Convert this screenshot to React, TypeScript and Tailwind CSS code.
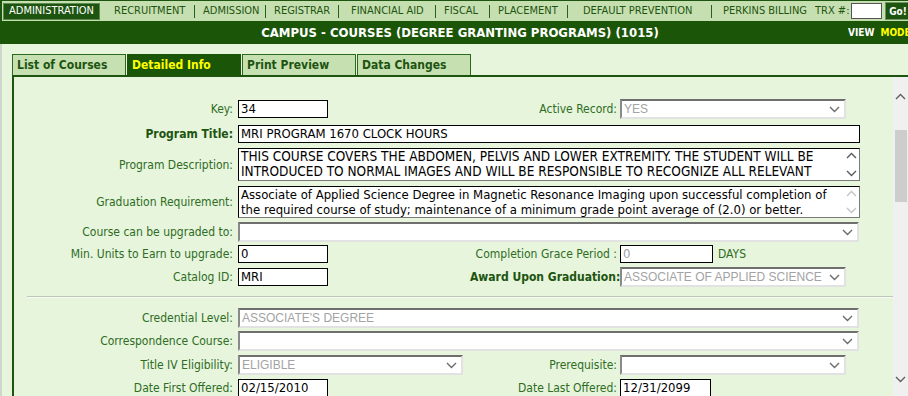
import React from "react";

const T = "font-['Tahoma','DejaVu_Sans_Condensed','DejaVu_Sans',sans-serif]";
const A = "font-['Liberation_Sans','Arial',sans-serif]";

function Chevron({ color = "#6b6b6b" }: { color?: string }) {
  return (
    <svg width="11" height="7" viewBox="0 0 11 7" className="shrink-0">
      <polyline points="1,1 5.5,5.5 10,1" fill="none" stroke={color} strokeWidth="1.4" />
    </svg>
  );
}

function ChevronUp({ color = "#6b6b6b" }: { color?: string }) {
  return (
    <svg width="11" height="7" viewBox="0 0 11 7" className="shrink-0">
      <polyline points="1,6 5.5,1.5 10,6" fill="none" stroke={color} strokeWidth="1.4" />
    </svg>
  );
}

function Label({ children, bold, w = "left" }: { children: React.ReactNode; bold?: boolean; w?: "left" | "right" }) {
  return (
    <div
      className={`${T} shrink-0 text-right text-[12px] whitespace-nowrap ${w === "left" ? "w-[224px] pr-[5px]" : "w-[150px] pr-[3px]"} ${bold ? "font-bold text-[#1d5410]" : "text-[#2f6c1f]"}`}
    >
      {children}
    </div>
  );
}

function TextInput({ value, w, gray }: { value: string; w: string; gray?: boolean }) {
  return (
    <div className={`${T} ${w} h-[18px] shrink-0 border border-black bg-white px-[2px] text-[13px] leading-[16px] ${gray ? "text-[#a0a0a0]" : "text-black"}`}>
      {value}
    </div>
  );
}

function Select({ value, w }: { value?: string; w: string }) {
  return (
    <div className={`${A} ${w} h-[20px] shrink-0 flex items-center justify-between border-t-2 border-l-2 border-t-[#6e6e6e] border-l-[#8a8a8a] border-r-2 border-b-2 border-r-[#e2e2e2] border-b-[#e2e2e2] bg-white pl-[2px] pr-[4px] text-[12px] leading-[16px] text-[#a3a3a3]`}>
      <span className="whitespace-nowrap overflow-hidden">{value ?? ""}</span>
      <Chevron />
    </div>
  );
}

function TextArea({ lines, h, arrowColor, size }: { lines: string[]; h: string; arrowColor: string; size: string }) {
  return (
    <div className={`${h} w-[622px] shrink-0 flex border border-black border-r-[#7a7a7a] border-b-[#7a7a7a] bg-white`}>
      <div className={`${T} ${size} flex-1 overflow-hidden pl-[2px] leading-[15px] text-black whitespace-nowrap`}>
        {lines.map((l, i) => (
          <div key={i}>{l}</div>
        ))}
      </div>
      <div className="w-[16px] flex flex-col items-center justify-between py-[3px]">
        <ChevronUp color={arrowColor} />
        <Chevron color={arrowColor} />
      </div>
    </div>
  );
}

function NavItem({ children, w }: { children: React.ReactNode; w: string }) {
  return <div className={`${w} shrink-0 whitespace-nowrap`}>{children}</div>;
}

function Sep({ w }: { w: string }) {
  return (
    <div className={`${w} shrink-0 flex`}>
      <div className="w-px h-[13px] bg-[#2a5e1c]" />
    </div>
  );
}

export default function App() {
  return (
    <div className="w-[908px] h-[396px] overflow-hidden bg-[#e6f5dc] relative">
      {/* Top nav */}
      <div className={`${T} h-[21px] flex items-center border-t border-l-2 border-[#1d5410] bg-[#c6dfb0] text-[11px] text-[#1d5410]`}>
        <div className="ml-px w-[97px] h-[17px] shrink-0 flex items-center justify-center bg-[#1d5410] border border-[#5d8a4e] text-white">
          ADMINISTRATION
        </div>
        <div className="w-[14px] shrink-0" />
        <NavItem w="w-[80px]">RECRUITMENT</NavItem>
        <Sep w="w-[9px]" />
        <NavItem w="w-[62px]">ADMISSION</NavItem>
        <Sep w="w-[9px]" />
        <NavItem w="w-[64px]">REGISTRAR</NavItem>
        <Sep w="w-[13px]" />
        <NavItem w="w-[84px]">FINANCIAL AID</NavItem>
        <Sep w="w-[9px]" />
        <NavItem w="w-[45px]">FISCAL</NavItem>
        <Sep w="w-[9px]" />
        <NavItem w="w-[69px]">PLACEMENT</NavItem>
        <Sep w="w-[16px]" />
        <NavItem w="w-[128px]">DEFAULT PREVENTION</NavItem>
        <Sep w="w-[12px]" />
        <NavItem w="w-[92px]">PERKINS BILLING</NavItem>
        <NavItem w="w-[36px]">TRX #:</NavItem>
        <div className="w-[31px] h-[16px] shrink-0 bg-white border border-[#555]" />
        <div className="ml-[3px] w-[26px] h-[18px] shrink-0 flex items-center justify-center bg-[#1d5410] border border-[#6f9460] text-white text-[10px] font-bold">
          Go!
        </div>
      </div>

      {/* Header */}
      <div className={`${T} h-[23px] flex items-center bg-[#1b5608] text-white`}>
        <div className="flex-1 pl-[72px] text-center text-[13px] font-bold">
          CAMPUS - COURSES (DEGREE GRANTING PROGRAMS) (1015)
        </div>
        <div className="w-[60px] shrink-0 whitespace-nowrap overflow-hidden text-[10px] font-bold">
          VIEW <span className="ml-[3px] text-[#ffff00]">MODE</span>
        </div>
      </div>

      {/* Body */}
      <div className="border-l-2 border-[#cfd6cb] h-[352px]">
        {/* Tabs */}
        <div className={`${T} flex pl-[10px] pt-[10px] text-[12px] font-bold`}>
          <div className="w-[114px] h-[21px] flex items-center pl-[4px] bg-[#c7e0b2] border border-b-0 border-[#2b6a1c] text-[#1d5410]">List of Courses</div>
          <div className="ml-px w-[114px] h-[21px] flex items-center pl-[5px] bg-[#1b5608] text-[#ffff00]">Detailed Info</div>
          <div className="ml-px w-[114px] h-[21px] flex items-center pl-[4px] bg-[#c7e0b2] border border-b-0 border-[#2b6a1c] text-[#1d5410]">Print Preview</div>
          <div className="ml-px w-[114px] h-[21px] flex items-center pl-[4px] bg-[#c7e0b2] border border-b-0 border-[#2b6a1c] text-[#1d5410]">Data Changes</div>
        </div>

        {/* Panel */}
        <div className="ml-[10px] flex h-[322px] border-l-2 border-t-2 border-[#1d5410]">
          <div className="flex-1 flex flex-col">
            {/* Row Key / Active */}
            <div className="mt-[22px] h-[20px] flex items-center">
              <div className="w-[456px] flex items-center shrink-0">
                <Label>Key:</Label>
                <TextInput value="34" w="w-[90px]" />
              </div>
              <Label w="right">Active Record:</Label>
              <Select value="YES" w="w-[226px]" />
            </div>
            {/* Program Title */}
            <div className="mt-[6px] h-[20px] flex items-center">
              <Label bold>Program Title:</Label>
              <TextInput value="MRI PROGRAM 1670 CLOCK HOURS" w="w-[622px]" />
            </div>
            {/* Program Description */}
            <div className="mt-[5px] flex items-center">
              <Label>Program Description:</Label>
              <TextArea
                h="h-[33px]"
                size="text-[13.5px]"
                arrowColor="#5a5a5a"
                lines={[
                  "THIS COURSE COVERS THE ABDOMEN, PELVIS AND LOWER EXTREMITY. THE STUDENT WILL BE",
                  "INTRODUCED TO NORMAL IMAGES AND WILL BE RESPONSIBLE TO RECOGNIZE ALL RELEVANT",
                ]}
              />
            </div>
            {/* Graduation Requirement */}
            <div className="mt-[5px] flex items-center">
              <Label>Graduation Requirement:</Label>
              <TextArea
                h="h-[32px]"
                size="text-[13px]"
                arrowColor="#c4c4c4"
                lines={[
                  "Associate of Applied Science Degree in Magnetic Resonance Imaging upon successful completion of",
                  "the required course of study; maintenance of a minimum grade point average of (2.0) or better.",
                ]}
              />
            </div>
            {/* Course upgrade */}
            <div className="mt-[4px] h-[20px] flex items-center">
              <Label>Course can be upgraded to:</Label>
              <Select w="w-[621px]" />
            </div>
            {/* Min units / grace */}
            <div className="mt-[3px] h-[20px] flex items-center">
              <div className="w-[456px] flex items-center shrink-0">
                <Label>Min. Units to Earn to upgrade:</Label>
                <TextInput value="0" w="w-[90px]" />
              </div>
              <Label w="right">Completion Grace Period :</Label>
              <TextInput value="0" w="w-[93px]" gray />
              <span className={`${T} ml-[5px] text-[12px] text-[#2f6c1f]`}>DAYS</span>
            </div>
            {/* Catalog / Award */}
            <div className="mt-[4px] h-[20px] flex items-center">
              <div className="w-[456px] flex items-center shrink-0">
                <Label>Catalog ID:</Label>
                <TextInput value="MRI" w="w-[90px]" />
              </div>
              <Label w="right" bold>Award Upon Graduation:</Label>
              <Select value="ASSOCIATE OF APPLIED SCIENCE" w="w-[226px]" />
            </div>
            {/* hr */}
            <div className="mt-[9px] ml-[13px] h-[2px] border-t border-[#bfc7bb] border-b border-b-[#f4fbf0]" />
            {/* Credential */}
            <div className="mt-[10px] h-[20px] flex items-center">
              <Label>Credential Level:</Label>
              <Select value="ASSOCIATE'S DEGREE" w="w-[621px]" />
            </div>
            <div className="mt-[3px] h-[20px] flex items-center">
              <Label>Correspondence Course:</Label>
              <Select w="w-[621px]" />
            </div>
            <div className="mt-[4px] h-[20px] flex items-center">
              <div className="w-[456px] flex items-center shrink-0">
                <Label>Title IV Eligibility:</Label>
                <Select value="ELIGIBLE" w="w-[225px]" />
              </div>
              <Label w="right">Prerequisite:</Label>
              <Select w="w-[226px]" />
            </div>
            <div className="mt-[4px] h-[20px] flex items-center">
              <div className="w-[456px] flex items-center shrink-0">
                <Label>Date First Offered:</Label>
                <TextInput value="02/15/2010" w="w-[90px]" />
              </div>
              <Label w="right">Date Last Offered:</Label>
              <TextInput value="12/31/2099" w="w-[91px]" />
            </div>
          </div>
          {/* Scrollbar */}
          <div className="w-[15px] shrink-0 bg-[#f0f0f0] flex flex-col items-center">
            <div className="mt-[16px]">
              <ChevronUp color="#606060" />
            </div>
            <div className="mt-[30px] w-[12px] h-[72px] bg-[#cdcdcd]" />
            <div className="mt-auto mb-[14px]">
              <Chevron color="#606060" />
            </div>
          </div>
        </div>
      </div>
    </div>
  );
}
